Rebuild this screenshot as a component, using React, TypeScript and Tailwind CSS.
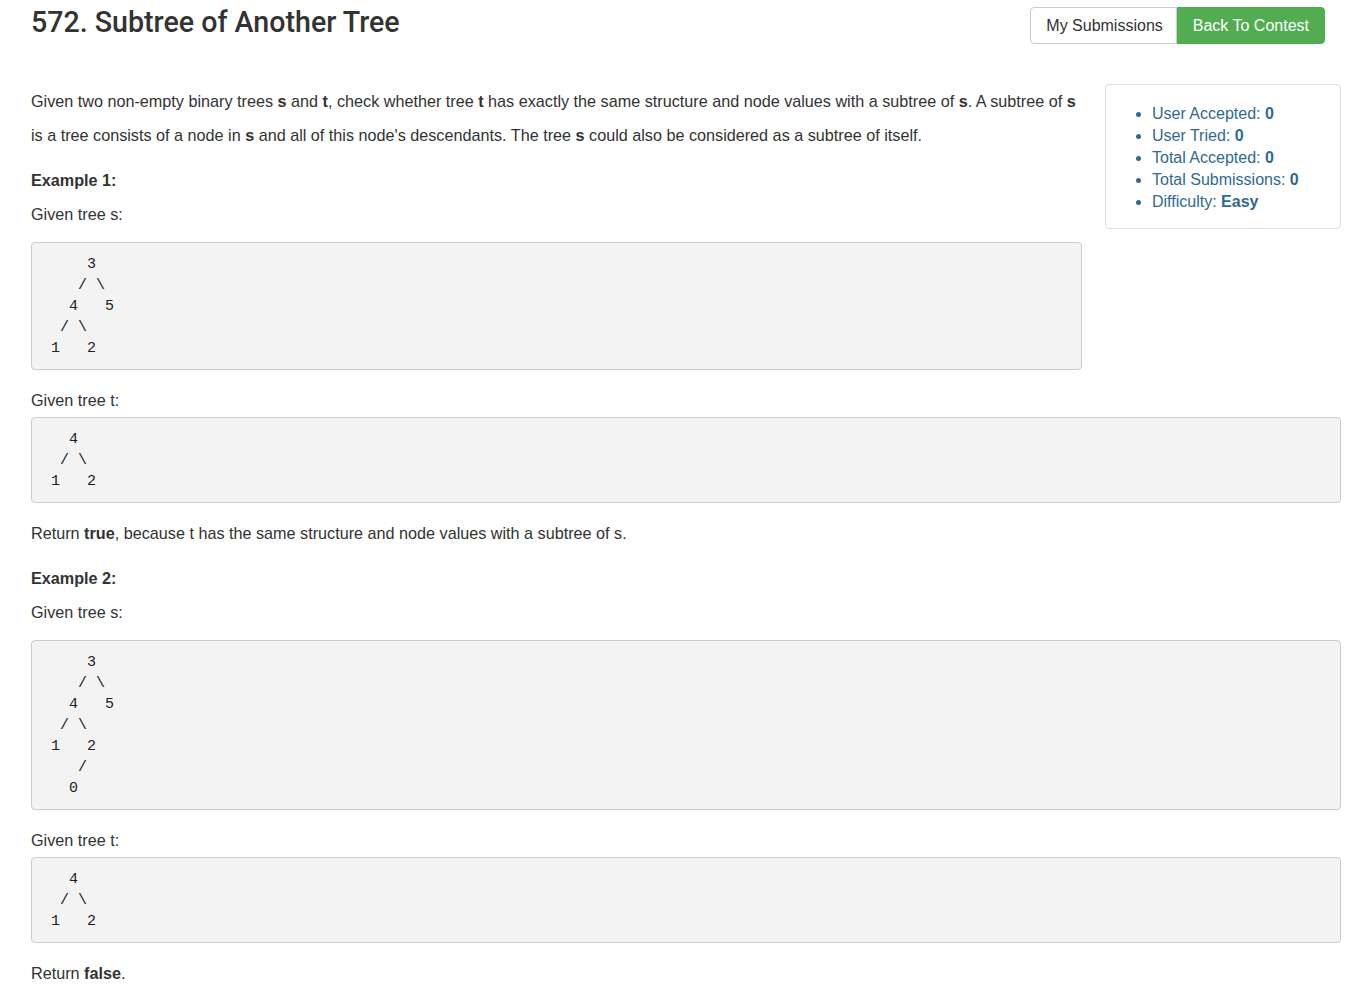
import React from 'react'

const treeS1 = `     3
    / \\
   4   5
  / \\
 1   2`

const treeT = `   4
  / \\
 1   2`

const treeS2 = `     3
    / \\
   4   5
  / \\
 1   2
    /
   0`

function Tree({ text }: { text: string }) {
  return (
    <pre className="overflow-auto mb-[13px] px-[10px] py-[10.5px] bg-[#f3f3f3] border border-[#cccccc] rounded-[4px] text-[15px] leading-[21px] text-[#222] font-['Liberation_Mono',monospace]">
      {text}
    </pre>
  )
}

function Stat({ label, value }: { label: string; value: string }) {
  return (
    <li>
      {label}: <b>{value}</b>
    </li>
  )
}

export default function App() {
  return (
    <div className="min-h-[999px] bg-white pl-[31px] pr-[25px] text-[#333] text-[16.2px] leading-[34px] font-['Liberation_Sans',Arial,sans-serif]">
      <div className="flex items-start justify-between h-[84px]">
        <h1 className="text-[28.6px] leading-[44px] font-medium text-[#333] font-['Roboto',sans-serif]">
          572. Subtree of Another Tree
        </h1>
        <div className="flex mt-[7px] mr-[16px] text-[16px] leading-[20px]">
          <button className="h-[37px] pl-[15px] pr-[13px] bg-white border border-[#cccccc] rounded-l-[4px] text-[#333]">
            My Submissions
          </button>
          <button className="h-[37px] px-[15px] bg-[#52ad52] border border-[#4cae4c] rounded-r-[4px] text-white">
            Back To Contest
          </button>
        </div>
      </div>

      <div>
        <div className="float-right ml-[23px] mb-[20px] w-[236px] border border-[#dddddd] rounded-[4px] pt-[18px] pb-[15px] pl-[16px] pr-[10px]">
          <ul className="list-disc pl-[30px] text-[#2f6a90] text-[16px] leading-[22px] marker:text-[#2f6a90]">
            <Stat label="User Accepted" value="0" />
            <Stat label="User Tried" value="0" />
            <Stat label="Total Accepted" value="0" />
            <Stat label="Total Submissions" value="0" />
            <li>
              Difficulty: <b>Easy</b>
            </li>
          </ul>
        </div>

        <p className="mb-[11px]">
          Given two non-empty binary trees <b>s</b> and <b>t</b>, check whether tree <b>t</b> has exactly the same
          structure and node values with a subtree of <b>s</b>. A subtree of <b>s</b> is a tree consists of a node in{' '}
          <b>s</b> and all of this node's descendants. The tree <b>s</b> could also be considered as a subtree of
          itself.
        </p>

        <p className="mb-[11px]">
          <b>Example 1:</b>
          <br />
          Given tree s:
        </p>
        <Tree text={treeS1} />
        <div>Given tree t:</div>
        <Tree text={treeT} />
        <p className="mb-[11px]">
          Return <b>true</b>, because t has the same structure and node values with a subtree of s.
        </p>

        <p className="mb-[11px]">
          <b>Example 2:</b>
          <br />
          Given tree s:
        </p>
        <Tree text={treeS2} />
        <div>Given tree t:</div>
        <Tree text={treeT} />
        <p className="mb-[11px]">
          Return <b>false</b>.
        </p>
      </div>
    </div>
  )
}
